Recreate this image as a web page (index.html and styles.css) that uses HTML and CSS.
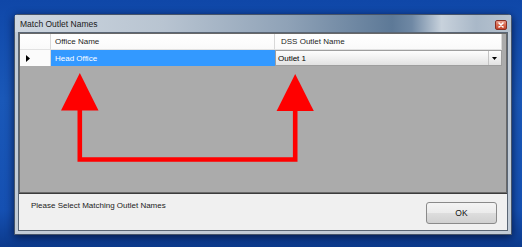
FILE: index.html
```html
<!DOCTYPE html>
<html lang="en">
<head>
  <meta charset="UTF-8">
  <title>Match Outlet Names</title>
  <link rel="stylesheet" href="styles.css">
</head>
<body>
  <div class="desktop">
    <div class="window">
      <div class="titlebar">
        <span class="title">Match Outlet Names</span>
        <span class="close-btn">
          <svg viewBox="0 0 12 10" width="12" height="10">
            <path d="M4 3 L8 7 M8 3 L4 7" stroke="#fff" stroke-width="1.6" stroke-linecap="round"></path>
          </svg>
        </span>
      </div>

      <div class="client">
        <div class="grid">
          <div class="grid-row grid-head">
            <div class="cell row-head"></div>
            <div class="cell col-office">Office Name</div>
            <div class="cell col-outlet head-outlet">DSS Outlet Name</div>
          </div>
          <div class="grid-row">
            <div class="cell row-head">
              <svg viewBox="0 0 4 7" width="4" height="7">
                <path d="M0 0 L4 3.5 L0 7 Z" fill="#000"></path>
              </svg>
            </div>
            <div class="cell col-office selected">Head Office</div>
            <div class="cell col-outlet combo">
              <span class="combo-text">Outlet 1</span>
              <span class="combo-btn">
                <svg viewBox="0 0 5 3" width="5" height="3">
                  <path d="M0 0 H5 L2.5 3 Z" fill="#000"></path>
                </svg>
              </span>
            </div>
          </div>

          <!-- annotation arrows drawn over the grid -->
          <svg class="arrows" viewBox="0 0 486 158" width="486" height="158">
            <path d="M59.8 76 V125.5 H275.2 V76" fill="none" stroke="#ff0000" stroke-width="4.6" stroke-linejoin="miter"></path>
            <path d="M59.8 39 L78.5 76.5 L41 76.5 Z" fill="#ff0000"></path>
            <path d="M275.2 40 L293.8 77 L256.6 77 Z" fill="#ff0000"></path>
          </svg>
        </div>

        <div class="footer">
          <span class="hint">Please Select Matching Outlet Names</span>
          <button class="ok-btn">OK</button>
        </div>
      </div>
    </div>
  </div>
</body>
</html>
```

FILE: styles.css
```css
:root {
  --desktop-blue: #1753b4;
  --frame: #c2ccd7;
  --grid-bg: #ababab;
  --select-blue: #3399ff;
  --form-bg: #f0f0f0;
}

* {
  margin: 0;
  padding: 0;
  box-sizing: border-box;
}

body {
  width: 522px;
  height: 247px;
  overflow: hidden;
  font-family: "Liberation Sans", Arial, sans-serif;
  font-size: 8px;
  color: #000;
  background: linear-gradient(180deg, #0f47a8 0%, #1a58b8 40%, #1550b2 85%, #0c3a8c 100%);
}

.desktop {
  padding: 14px 0 0 14px;
}

.window {
  width: 498px;
  height: 221px;
  display: flex;
  flex-direction: column;
  padding: 0 3px 3px;
  background-color: var(--frame);
  border: 1px solid #46546a;
  border-radius: 4px 4px 0 0;
  box-shadow: 0 2px 8px rgba(0, 10, 40, 0.75);
}

.titlebar {
  height: 17px;
  margin: 0 -3px;
  padding: 0 4px 0 5px;
  display: flex;
  align-items: center;
  justify-content: space-between;
  background: linear-gradient(90deg, #cfd7e0 0%, #b8c4d1 30%, #8fa2b7 55%, #5d7997 76%, #6f88a4 80%, #c8d2dc 86%, #a9b8c8 93%, #b7c3cf 100%);
}

.title {
  font-size: 8.5px;
  color: #1a1a1a;
  padding-top: 1px;
}

.close-btn {
  width: 12px;
  height: 10px;
  margin-top: 3px;
  display: flex;
  border: 1px solid #8a2f22;
  border-radius: 2px;
  background: linear-gradient(180deg, #eaa08f 0%, #d9694f 50%, #c3452c 100%);
}

.close-btn svg {
  margin: -1px;
}

.client {
  flex: 1;
  display: flex;
  flex-direction: column;
  border: 1px solid #5a6675;
  background-color: var(--form-bg);
}

.grid {
  position: relative;
  height: 160px;
  background-color: var(--grid-bg);
  border: 1px solid #696969;
}

.grid-row {
  display: flex;
  height: 16px;
}

.cell {
  height: 16px;
  display: flex;
  align-items: center;
  white-space: nowrap;
}

.row-head {
  width: 31px;
  background-color: #fbfbfb;
  border-right: 1px solid #d8d8d8;
  padding-left: 6px;
}

.grid-head .cell {
  background: linear-gradient(180deg, #ffffff 0%, #fafafa 100%);
  border-bottom: 1px solid #e2e2e2;
  color: #1e1e1e;
}

.col-office {
  width: 224px;
  padding-left: 4px;
  border-right: 1px solid #d8d8d8;
}

.col-outlet {
  width: 227px;
  padding-left: 6px;
}

.head-outlet {
  border-right: 1px solid #d8d8d8;
}

.selected {
  background-color: var(--select-blue);
  color: #fff;
  border-right-color: var(--select-blue);
}

.combo {
  justify-content: space-between;
  padding: 0 1px 0 2px;
  border: 1px solid #9e9e9e;
  background: linear-gradient(180deg, #fdfdfd 0%, #efefef 55%, #e2e2e2 100%);
}

.combo-btn {
  width: 12px;
  height: 14px;
  display: flex;
  align-items: center;
  justify-content: center;
  border-left: 1px solid #c4c4c4;
}

.arrows {
  position: absolute;
  left: 0;
  top: 0;
}

.footer {
  flex: 1;
  display: flex;
  justify-content: space-between;
  align-items: flex-start;
  padding: 7px 10px 0 12px;
  border-top: 1px solid #3c3c3c;
}

.hint {
  color: #222;
  line-height: 10px;
}

.ok-btn {
  width: 71px;
  height: 22px;
  margin-top: 1px;
  font-family: inherit;
  font-size: 8.5px;
  color: #111;
  border: 1px solid #8a8a8a;
  border-radius: 3px;
  background: linear-gradient(180deg, #f4f4f4 0%, #ebebeb 50%, #dddddd 52%, #d0d0d0 100%);
}
```
